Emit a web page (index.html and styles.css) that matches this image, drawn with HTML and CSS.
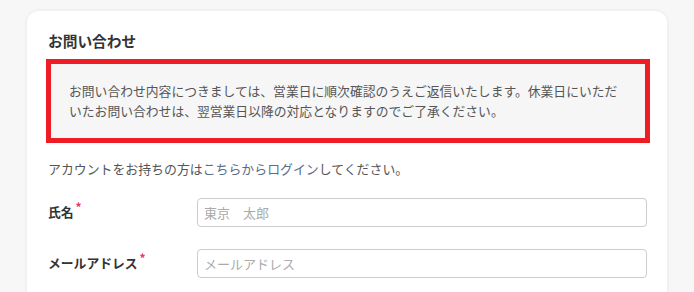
FILE: index.html
```html
<!DOCTYPE html>
<html lang="ja">
<head>
    <meta charset="UTF-8">
    <meta name="viewport" content="width=device-width, initial-scale=1.0">
    <title>お問い合わせ</title>
    <link rel="stylesheet" href="styles.css">
</head>
<body>
<div class="card">
    <h2 class="title">お問い合わせ</h2>
    <div class="notice">
        お問い合わせ内容につきましては、営業日に順次確認のうえご返信いたします。休業日にいただいたお問い合わせは、翌営業日以降の対応となりますのでご了承ください。
    </div>
    <p class="login-note">アカウントをお持ちの方は<a href="#">こちらからログイン</a>してください。</p>
    <div class="form-row">
        <label for="name">氏名<span class="required">*</span></label>
        <input type="text" id="name" placeholder="東京　太郎">
    </div>
    <div class="form-row">
        <label for="email">メールアドレス<span class="required">*</span></label>
        <input type="email" id="email" placeholder="メールアドレス">
    </div>
</div>
</body>
</html>
```

FILE: styles.css
```css
html, body {
    height: 292px;
    overflow: hidden;
}
body {
    font-family: "Noto Sans CJK JP", "Noto Sans", sans-serif;
    margin: 0;
    background-color: #f7f7f7;
    padding: 11px 27px 0;
    box-sizing: border-box;
}
.card {
    background-color: #fff;
    border-radius: 12px 12px 0 0;
    box-shadow: 0 0 4px rgba(0, 0, 0, 0.08);
    padding: 20px 20px 0 21px;
    height: 281px;
    box-sizing: border-box;
}
.title {
    margin: 0 0 8px;
    font-size: 14.7px;
    line-height: 20px;
    font-weight: bold;
    color: #333;
}
.notice {
    margin: 0 -3px 0 -2px;
    border: 5px solid #ee1c25;
    background-color: #f6f6f6;
    padding: 17px 18px;
    font-size: 12.8px;
    line-height: 20px;
    color: #555;
}
.login-note {
    margin: 16px 0 0;
    font-size: 12.9px;
    line-height: 20px;
    color: #555;
}
.login-note a {
    color: #5b6c86;
    text-decoration: none;
}
.form-row {
    display: flex;
    align-items: center;
    margin-top: 19px;
}
.form-row + .form-row {
    margin-top: 22px;
}
.form-row label {
    width: 149px;
    flex-shrink: 0;
    font-size: 12.8px;
    font-weight: bold;
    color: #333;
    margin-top: -6px;
}
.required {
    color: #e8336e;
    font-size: 12px;
    vertical-align: 5px;
    margin-left: 2px;
}
.form-row input {
    flex: 1;
    height: 29px;
    box-sizing: border-box;
    border: 1px solid #ccc;
    border-radius: 4px;
    padding: 0 6px;
    font-family: inherit;
    font-size: 13px;
    color: #333;
}
.form-row input::placeholder {
    color: #aaa;
}
```
